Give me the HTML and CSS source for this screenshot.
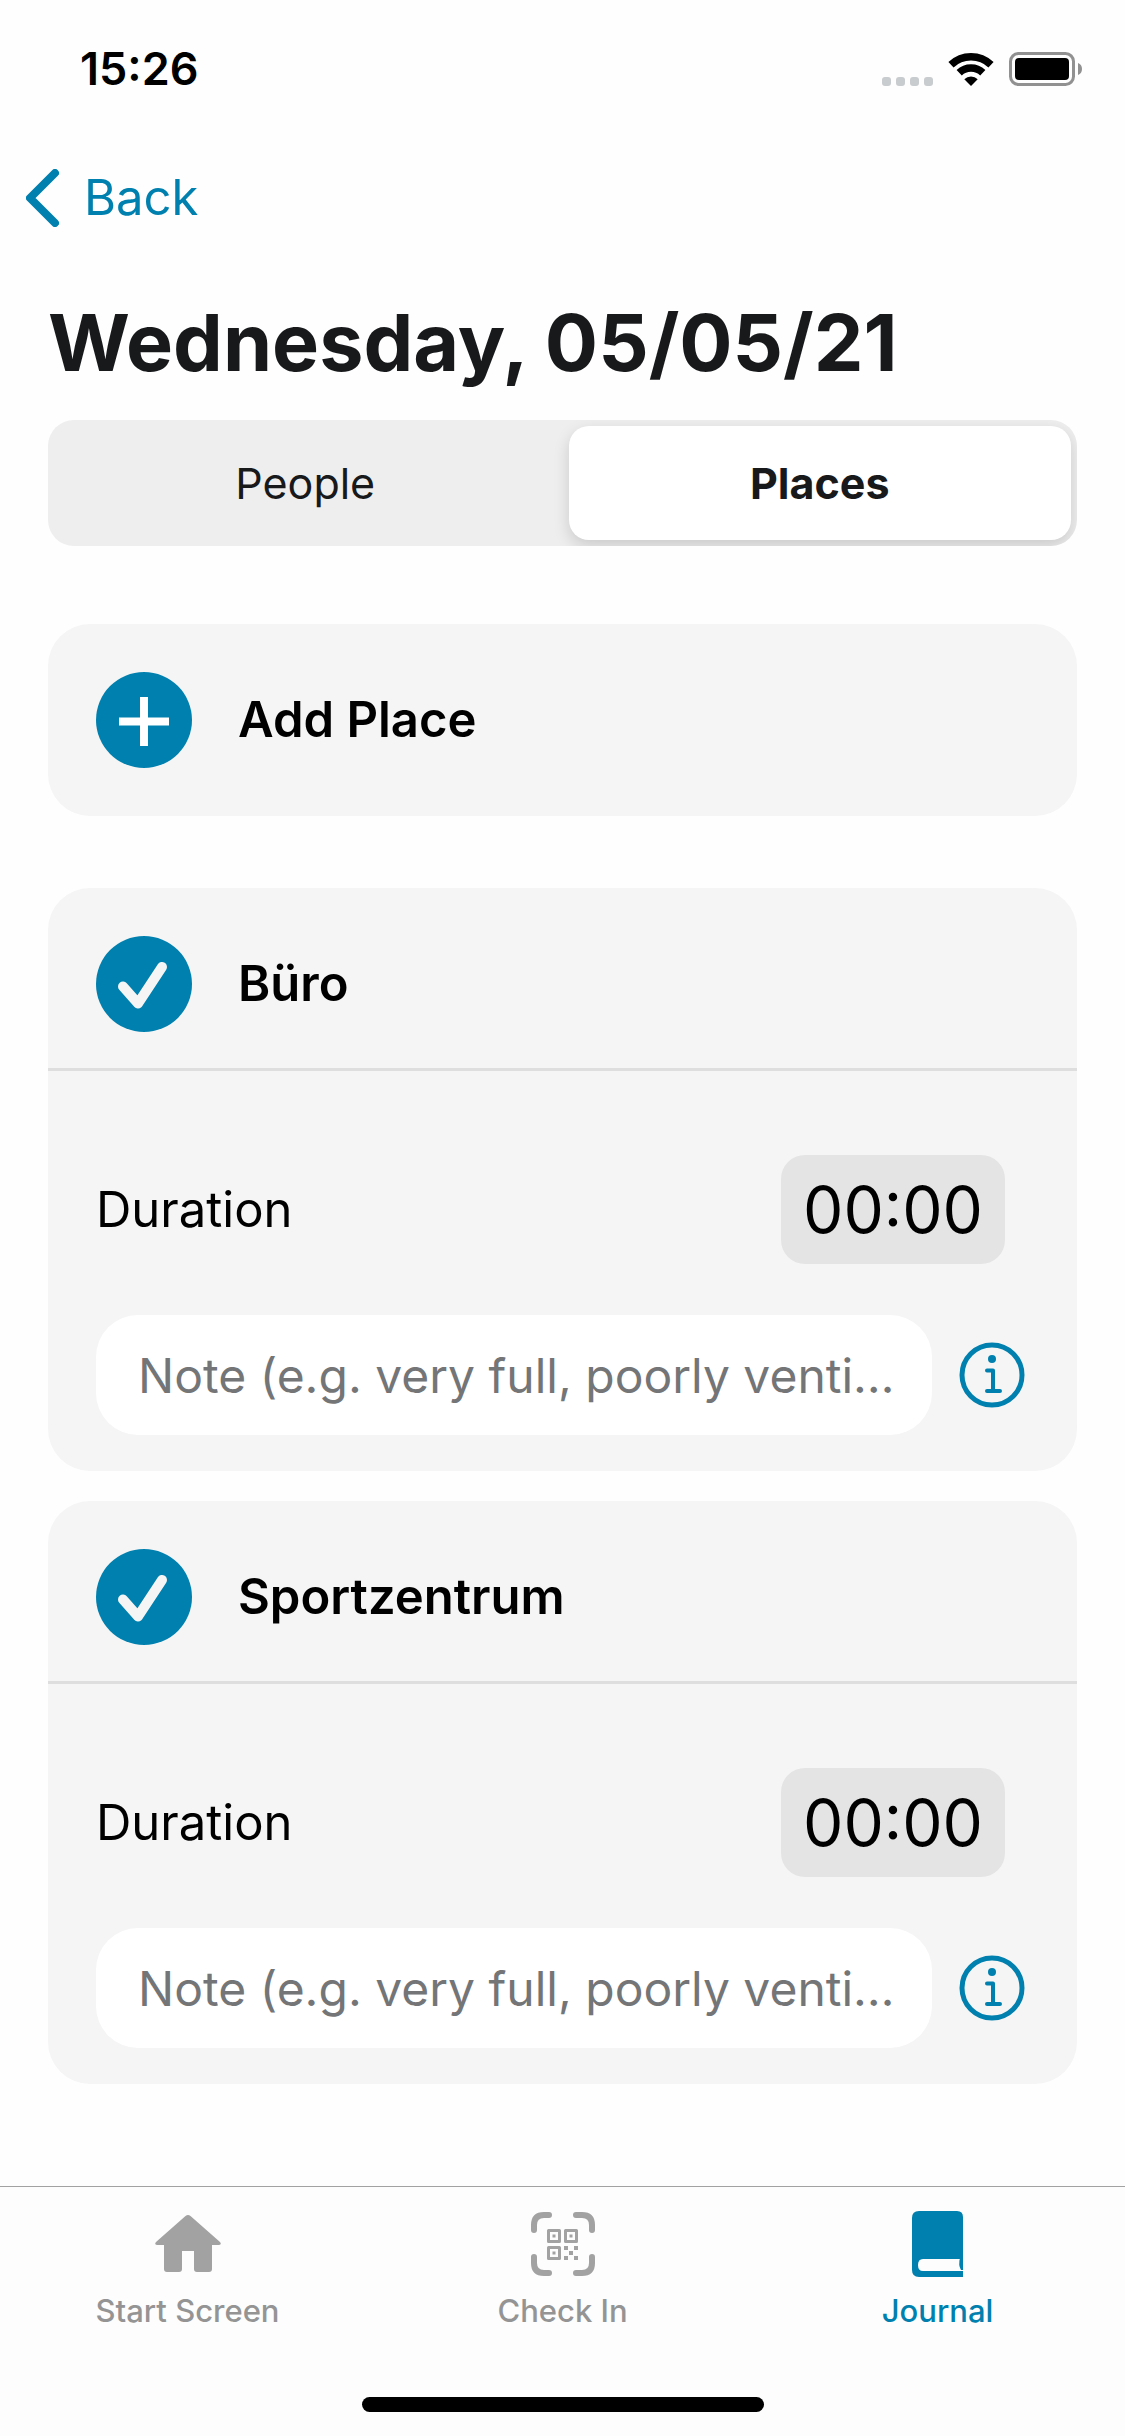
FILE: index.html
```html
<!DOCTYPE html>
<html lang="en">
<head>
<meta charset="utf-8">
<meta name="viewport" content="width=device-width, initial-scale=1">
<title>Journal</title>
<link rel="stylesheet" href="styles.css">
</head>
<body>
<header class="status">
  <time class="status-time">15:26</time>
  <div class="status-icons">
    <svg class="signal" viewBox="0 0 51 33" aria-hidden="true"><rect x="0" y="24" width="9" height="9" rx="3"/><rect x="14" y="24" width="9" height="9" rx="3"/><rect x="28" y="24" width="9" height="9" rx="3"/><rect x="42" y="24" width="9" height="9" rx="3"/></svg>
    <svg class="wifi" viewBox="0 0 46 33" aria-hidden="true"><path d="M23 33 16.300 26.300a9.500 9.500 0 0 1 13.400 0Z"/><path d="M11.200 19.800a17 17 0 0 1 23.600 0M3 11.800a29 29 0 0 1 40 0" fill="none" stroke="#000" stroke-width="7.500"/></svg>
    <svg class="battery" viewBox="0 0 74 34" aria-hidden="true"><rect x="1.500" y="1.500" width="63" height="31" rx="8" fill="none" stroke="#919191" stroke-width="3"/><rect x="6" y="6" width="54" height="22" rx="4"/><path d="M69 11a6.500 6.500 0 0 1 0 12Z" fill="#919191"/></svg>
  </div>
</header>

<nav class="navbar">
  <a class="back" href="#journal">
    <svg class="chevron" viewBox="0 0 34 58" aria-hidden="true"><path d="M29 4 4 29l25 25"/></svg>
    <span>Back</span>
  </a>
</nav>

<main class="content">
  <h1 class="title">Wednesday, 05/05/21</h1>

  <div class="segments" role="tablist">
    <button class="segment" type="button" role="tab" aria-selected="false">People</button>
    <button class="segment segment-active" type="button" role="tab" aria-selected="true">Places</button>
  </div>

  <button class="card add-card" type="button">
    <svg class="disc" viewBox="0 0 96 96" aria-hidden="true"><circle cx="48" cy="48" r="48" fill="#0080ae"/><path d="M48 25v49M23 49.500h50" stroke="#fff" stroke-width="8"/></svg>
    <span class="card-name">Add Place</span>
  </button>

  <section class="places">
    <article class="card">
      <button class="card-head" type="button" aria-pressed="true">
        <svg class="disc" viewBox="0 0 96 96" aria-hidden="true"><circle cx="48" cy="48" r="48" fill="#0080ae"/><path d="M27 50.500 42 67.500 66 31" class="tick"/></svg>
        <span class="card-name">Büro</span>
      </button>
      <div class="card-body">
        <div class="row duration">
          <label for="duration-1">Duration</label>
          <button class="time" id="duration-1" type="button">00:00</button>
        </div>
        <div class="row note-row">
          <input class="note" type="text" aria-label="Note" placeholder="Note (e.g. very full, poorly ventilated)">
          <button class="info" type="button" aria-label="Information">
            <svg viewBox="0 0 66 66" aria-hidden="true"><circle cx="33" cy="33" r="30"/><path d="M28 28.500H34v20.500M28 49h13" class="stem"/><circle class="dot" cx="33" cy="17" r="4"/></svg>
          </button>
        </div>
      </div>
    </article>

    <article class="card">
      <button class="card-head" type="button" aria-pressed="true">
        <svg class="disc" viewBox="0 0 96 96" aria-hidden="true"><circle cx="48" cy="48" r="48" fill="#0080ae"/><path d="M27 50.500 42 67.500 66 31" class="tick"/></svg>
        <span class="card-name">Sportzentrum</span>
      </button>
      <div class="card-body">
        <div class="row duration">
          <label for="duration-2">Duration</label>
          <button class="time" id="duration-2" type="button">00:00</button>
        </div>
        <div class="row note-row">
          <input class="note" type="text" aria-label="Note" placeholder="Note (e.g. very full, poorly ventilated)">
          <button class="info" type="button" aria-label="Information">
            <svg viewBox="0 0 66 66" aria-hidden="true"><circle cx="33" cy="33" r="30"/><path d="M28 28.500H34v20.500M28 49h13" class="stem"/><circle class="dot" cx="33" cy="17" r="4"/></svg>
          </button>
        </div>
      </div>
    </article>
  </section>
</main>

<footer class="tabbar">
  <nav class="tabs">
    <a class="tab" href="#start">
      <svg class="tab-icon" viewBox="0 0 66 66" aria-hidden="true"><path d="M30.500 5q2.500-2 5 0L65 31q2 2.500-1 3H57v24q0 3-3 3H42q-3 0-3-3V40H27v18q0 3-3 3H12q-3 0-3-3V34H2q-3-.5-1-3Z" fill="#a2a2a2"/></svg>
      <span>Start Screen</span>
    </a>
    <a class="tab" href="#checkin">
      <svg class="tab-icon" viewBox="0 0 66 66" aria-hidden="true" fill="none" stroke="#a2a2a2">
        <path d="M19 4h-5Q4 4 4 14v5M46 4h6q10 0 10 10v5M4 46v6q0 10 10 10h5M62 46v6q0 10-10 10h-6" stroke-width="6" stroke-linecap="round"/>
        <path d="M18.500 19.500h11v11h-11zM35.500 19.500h11v11h-11zM18.500 36.500h11v11h-11z" stroke-width="3" stroke-linejoin="round"/>
        <path d="M22.500 23.500h3v3h-3zM39.500 23.500h3v3h-3zM22.500 40.500h3v3h-3zM34 35h4v4h-4zM44 35h4v4h-4zM39 40h4v4h-4zM34 45h4v4h-4zM44 45h4v4h-4z" fill="#a2a2a2" stroke="none"/>
      </svg>
      <span>Check In</span>
    </a>
    <a class="tab tab-active" href="#journal" aria-current="page">
      <svg class="tab-icon" viewBox="0 0 66 66" aria-hidden="true"><path d="M14 0h38q6 0 6 6v42H18q-5 0-5 6t5 6h40v6H14q-7 0-7-7V7q0-7 7-7Z" fill="#0080ae"/><path d="M55 47h3v12h-2q-3-5-1-12Z" fill="#0080ae"/></svg>
      <span>Journal</span>
    </a>
  </nav>
  <div class="home-indicator"></div>
</footer>
</body>
</html>
```

FILE: styles.css
```css
* {
  box-sizing: border-box;
}

body {
  margin: 0;
  min-height: 100vh;
  display: flex;
  flex-direction: column;
  background: #fefefe;
  color: #000;
  font-family: Inter, "Liberation Sans", sans-serif;
  font-size: 49px;
  line-height: 60px;
}

button,
input {
  margin: 0;
  padding: 0;
  border: 0;
  background: none;
  color: inherit;
  font: inherit;
}

a {
  color: inherit;
  text-decoration: none;
}

svg {
  display: block;
  flex: none;
}

.status {
  display: flex;
  justify-content: space-between;
  align-items: center;
  height: 138px;
  padding: 0 42px 0 80px;
}

.status-time {
  font-size: 45px;
  font-weight: 600;
}

.status-icons {
  display: flex;
  align-items: center;
  gap: 15px;
}

.signal {
  width: 51px;
  height: 33px;
  fill: #c9cccf;
}

.wifi {
  width: 46px;
  height: 33px;
}

.battery {
  width: 74px;
  height: 34px;
}

.navbar {
  display: flex;
  align-items: center;
  height: 120px;
  padding: 0 26px;
}

.back {
  display: flex;
  align-items: center;
  gap: 24px;
  color: #0080ae;
}

.chevron {
  width: 34px;
  height: 58px;
  fill: none;
  stroke: #0080ae;
  stroke-width: 8;
  stroke-linecap: round;
  stroke-linejoin: round;
}

.content {
  padding: 34px 48px 102px;
}

.title {
  margin: 0 0 28px;
  color: #17191b;
  font-size: 79px;
  line-height: 100px;
  font-weight: 700;
}

.segments {
  display: grid;
  grid-template-columns: 1fr 1fr;
  gap: 12px;
  padding: 6px;
  border-radius: 26px;
  background: #eee;
  overflow: hidden;
}

.segment {
  height: 114px;
  border-radius: 20px;
  color: #17191b;
  font-size: 43px;
}

.segment-active {
  background: #fff;
  box-shadow: 0 6px 16px rgba(0, 0, 0, 0.15);
  font-weight: 700;
}

.card {
  display: block;
  width: 100%;
  border-radius: 42px;
  background: #f5f5f5;
  text-align: left;
}

.add-card {
  display: flex;
  align-items: center;
  gap: 46px;
  margin: 78px 0 72px;
  padding: 48px;
}

.disc {
  width: 96px;
  height: 96px;
}

.tick {
  fill: none;
  stroke: #f5f5f5;
  stroke-width: 10;
  stroke-linecap: round;
  stroke-linejoin: round;
}

.card-name {
  font-weight: 600;
}

.places {
  display: grid;
  gap: 30px;
}

.card-head {
  display: flex;
  align-items: center;
  gap: 46px;
  width: 100%;
  padding: 48px 48px 36px;
  border-bottom: 3px solid #dedede;
  text-align: left;
}

.card-body {
  display: grid;
  gap: 51px;
  padding: 84px 48px 36px;
}

.row {
  display: flex;
  align-items: center;
  justify-content: space-between;
}

.duration {
  padding-right: 24px;
}

.time {
  width: 224px;
  height: 109px;
  border-radius: 24px;
  background: #e4e4e4;
  font-size: 64px;
}

.note-row {
  gap: 27px;
}

.note {
  flex: 1;
  min-width: 0;
  height: 120px;
  padding: 0 36px 0 42px;
  border-radius: 42px;
  background: #fff;
  font-size: 48px;
  text-overflow: ellipsis;
}

.note::placeholder {
  color: #747577;
  opacity: 1;
  text-overflow: ellipsis;
}

.info {
  width: 66px;
  height: 66px;
  margin-right: 4px;
}

.info svg {
  width: 66px;
  height: 66px;
  fill: none;
  stroke: #0080ae;
  stroke-width: 5;
  stroke-linecap: round;
  stroke-linejoin: round;
}

.info .stem {
  stroke-width: 4;
}

.info .dot {
  fill: #0080ae;
  stroke: none;
}

.tabbar {
  display: flex;
  flex-direction: column;
  align-items: center;
  justify-content: space-between;
  height: 250px;
  margin-top: auto;
  padding: 24px 0;
  border-top: 1px solid #a2a2a2;
  background: #fdfdfd;
}

.tabs {
  display: grid;
  grid-template-columns: repeat(3, 1fr);
  width: 100%;
}

.tab {
  display: flex;
  flex-direction: column;
  align-items: center;
  gap: 14px;
  color: #949494;
  font-size: 31px;
  line-height: 40px;
  font-weight: 500;
}

.tab-active {
  color: #0080ae;
}

.tab-icon {
  width: 66px;
  height: 66px;
}

.home-indicator {
  width: 402px;
  height: 15px;
  border-radius: 8px;
  background: #000;
}
```
